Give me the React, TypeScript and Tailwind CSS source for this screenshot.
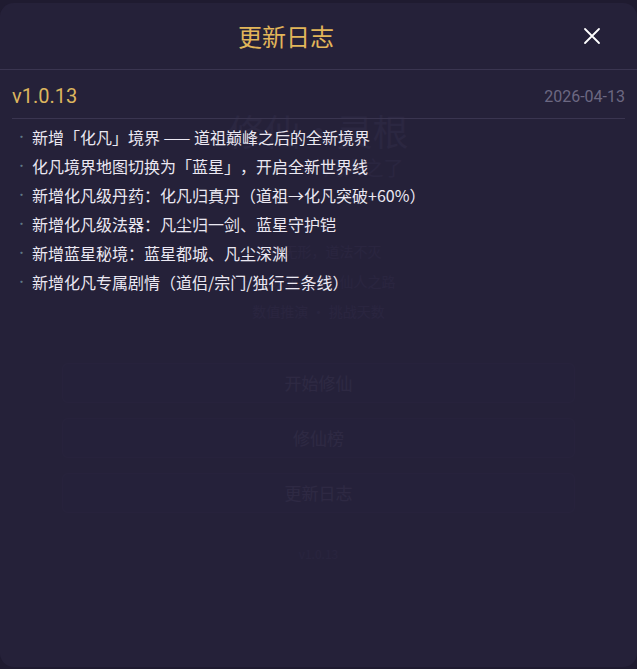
import React from "react";

const items = [
  "新增「化凡」境界 —— 道祖巅峰之后的全新境界",
  "化凡境界地图切换为「蓝星」，开启全新世界线",
  "新增化凡级丹药：化凡归真丹（道祖→化凡突破+60%）",
  "新增化凡级法器：凡尘归一剑、蓝星守护铠",
  "新增蓝星秘境：蓝星都城、凡尘深渊",
  "新增化凡专属剧情（道侣/宗门/独行三条线）",
];

const cjk = { fontFamily: '"Noto Sans CJK SC", sans-serif' };
const latin = { fontFamily: 'Roboto, "Noto Sans CJK SC", sans-serif' };

export default function App() {
  return (
    <div
      className="relative w-[637px] h-[669px] overflow-hidden bg-[#15131a] [text-spacing-trim:space-all]"
      style={cjk}
    >
      {/* background page */}
      <div className="flex h-full flex-col items-center bg-[#1f1b30] pt-[108px]">
        <div className="text-[36px] leading-[44px] text-[#6a6488]">修仙·灵根</div>
        <div className="mt-[2px] pl-[90px] text-[20px] leading-[28px] text-[#605a7e]">凡人之了</div>
        <div className="mt-[58px] flex flex-col items-center gap-[8px] text-[14px] leading-[22px] text-[#5a5478]">
          <div>大道无形，道法不灭</div>
          <div>一念成仙，踏上仙人之路</div>
          <div>数值推演 · 挑战天数</div>
        </div>
        <div className="mt-[41px] flex w-[513px] flex-col gap-[15px]">
          <div className="flex h-[40px] items-center justify-center rounded-[6px] border border-[#34304a] bg-[#221e34] text-[17px] text-[#8a85a8]">开始修仙</div>
          <div className="flex h-[40px] items-center justify-center rounded-[6px] border border-[#34304a] bg-[#221e34] text-[17px] text-[#8a85a8]">修仙榜</div>
          <div className="flex h-[40px] items-center justify-center rounded-[6px] border border-[#34304a] bg-[#221e34] text-[17px] text-[#8a85a8]">更新日志</div>
        </div>
        <div className="mt-[32px] text-[12px] text-[#4a4566]">v1.0.13</div>
      </div>

      {/* modal */}
      <div className="absolute left-0 right-0 top-[3px] bottom-[2px] flex flex-col rounded-[14px] bg-[#26223b]/[0.92]">
        <div className="flex h-[67px] shrink-0 items-center border-b border-[#3a3550]">
          <div className="flex-1 text-center text-[24px] leading-[32px] text-[#e2b65a]">更新日志</div>
          <div className="flex w-[65px] shrink-0 items-center justify-start pl-[10px]">
            <button className="flex h-[20px] w-[20px] items-center justify-center text-white">
              <svg width="18" height="18" viewBox="0 0 18 18" fill="none" stroke="currentColor" strokeWidth="1.8" strokeLinecap="round">
                <path d="M2 2 L16 16 M16 2 L2 16" />
              </svg>
            </button>
          </div>
        </div>
        <div className="px-[12px]">
          <div className="flex items-end justify-between border-b border-[#3a3550] pb-[8px] pt-[12px]" style={latin}>
            <span className="text-[20px] leading-[28px] text-[#dcb55e]">v1.0.13</span>
            <span className="pb-[3px] text-[16px] leading-[20px] text-[#6c6882]">2026-04-13</span>
          </div>
          <ul className="mt-[3px] flex flex-col">
            {items.map((t) => (
              <li key={t} className="flex h-[29px] items-center text-[16px] text-[#ebe8f2]">
                <span className="w-[20px] pl-[4px] text-[11px] text-[#5f7886]">·</span>
                <span>{t}</span>
              </li>
            ))}
          </ul>
        </div>
      </div>
    </div>
  );
}
